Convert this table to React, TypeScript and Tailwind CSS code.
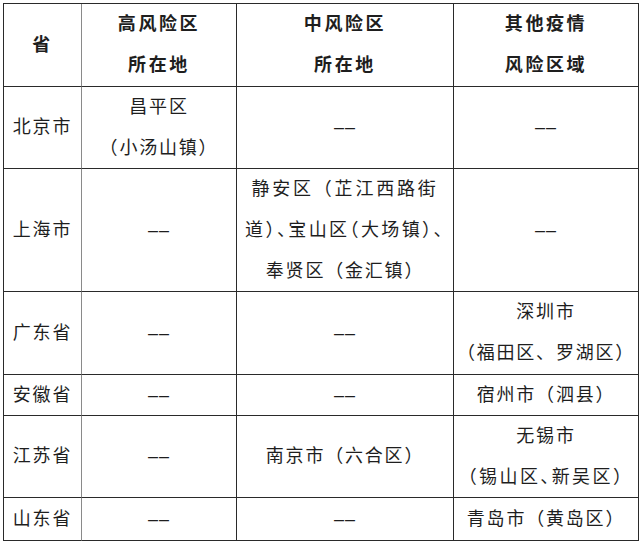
import React from 'react';

type Row = { h: string; prov: string; high: React.ReactNode; mid: React.ReactNode; other: React.ReactNode };

// the source table uses two short dashes for "none"
const dash = <span className="tracking-[1px]">––</span>;

const rows: Row[] = [
  { h: 'h-[82px]', prov: '北京市', high: <>昌平区<br />（小汤山镇）</>, mid: dash, other: dash },
  {
    h: 'h-[123px]',
    prov: '上海市',
    high: dash,
    mid: (
      <>
        <span className="tracking-[2.8px] whitespace-nowrap">静安区（芷江西路街</span>
        <br />
        <span className="tracking-[2.4px] whitespace-nowrap [font-feature-settings:'halt']">道）、宝山区（大场镇）、</span>
        <br />
        奉贤区（金汇镇）
      </>
    ),
    other: dash,
  },
  { h: 'h-[83px]', prov: '广东省', high: dash, mid: dash, other: <>深圳市<br />（福田区、罗湖区）</> },
  { h: 'h-[41px]', prov: '安徽省', high: dash, mid: dash, other: '宿州市（泗县）' },
  {
    h: 'h-[82px]',
    prov: '江苏省',
    high: dash,
    mid: '南京市（六合区）',
    other: <>无锡市<br /><span className="whitespace-nowrap [font-feature-settings:'halt'] tracking-[2.4px]">（锡山区、新吴区）</span></>,
  },
  { h: 'h-[43px]', prov: '山东省', high: dash, mid: dash, other: '青岛市（黄岛区）' },
];

const cell = 'flex items-center justify-center text-center border-r border-b border-[#2a2a2a]';
const head = 'font-bold tracking-[2.6px]';

export default function App() {
  return (
    <div className="w-[641px] h-[543px] bg-white pt-[3px] pl-[3px] text-[18px] leading-[41px] tracking-[1.8px] text-[#1e1e1e] font-['Liberation_Sans','Noto_Sans_CJK_SC',sans-serif]">
      <div className="grid grid-cols-[78px_155px_217px_185px] w-[636px] border-l border-t border-[#2a2a2a]">
        <div className={`${cell} h-[83px] ${head} border-r-[#8a8a8a]`}><div>省</div></div>
        <div className={`${cell} h-[83px] ${head}`}><div>高风险区<br />所在地</div></div>
        <div className={`${cell} h-[83px] ${head}`}><div>中风险区<br />所在地</div></div>
        <div className={`${cell} h-[83px] ${head}`}><div>其他疫情<br />风险区域</div></div>
        {rows.map((r) => (
          <React.Fragment key={r.prov}>
            <div className={`${cell} ${r.h} border-r-[#8a8a8a]`}><div>{r.prov}</div></div>
            <div className={`${cell} ${r.h}`}><div>{r.high}</div></div>
            <div className={`${cell} ${r.h}`}><div>{r.mid}</div></div>
            <div className={`${cell} ${r.h}`}><div>{r.other}</div></div>
          </React.Fragment>
        ))}
      </div>
    </div>
  );
}
